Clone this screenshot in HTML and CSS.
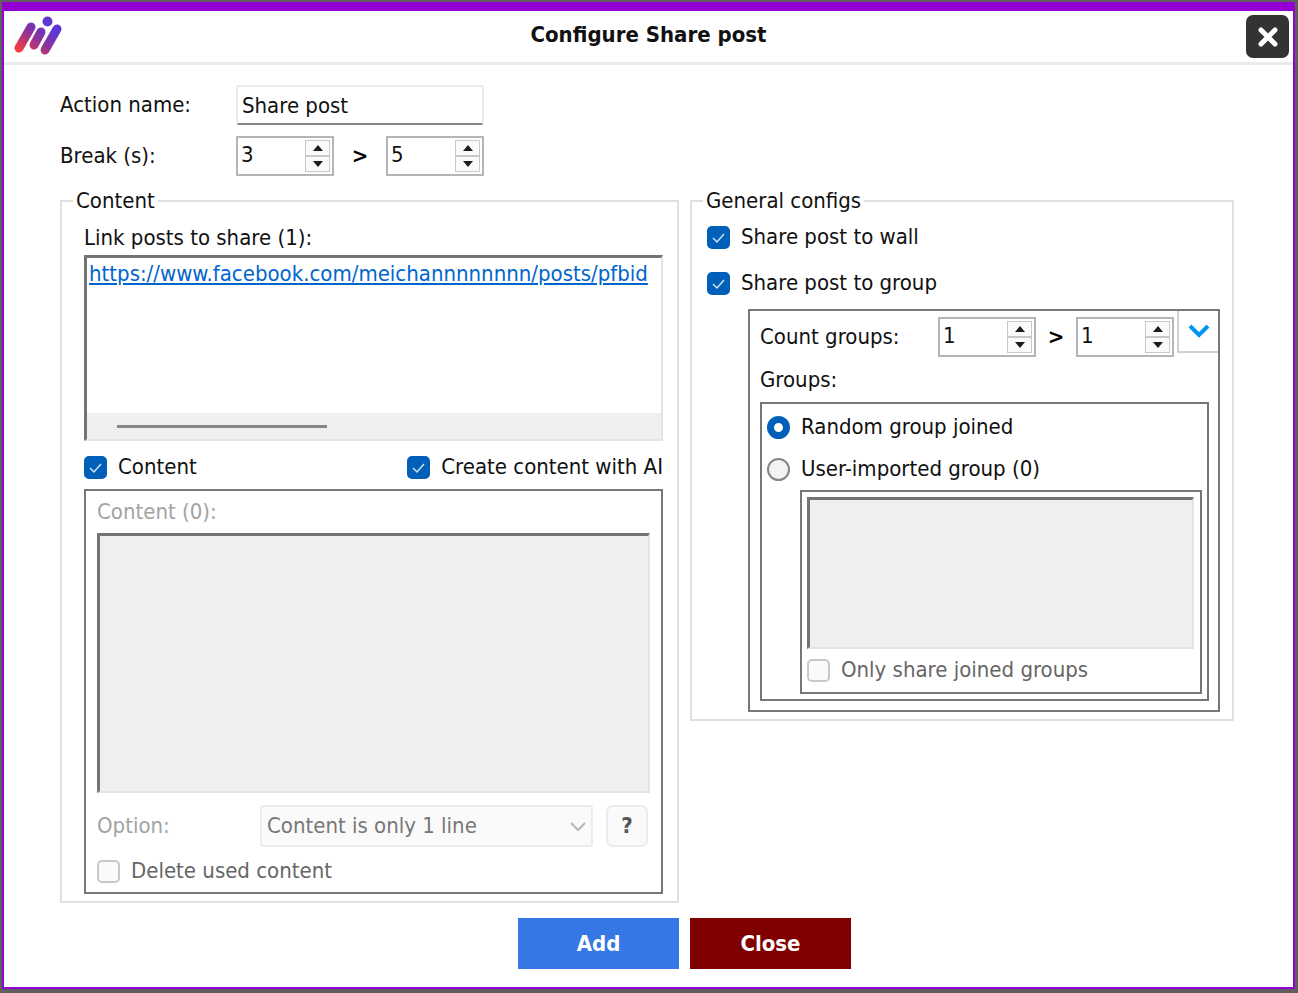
FILE: index.html
```html
<!DOCTYPE html>
<html lang="en">
<head>
<meta charset="utf-8">
<meta name="viewport" content="width=device-width, initial-scale=1">
<title>Configure Share post</title>
<link rel="stylesheet" href="styles.css">
</head>
<body>
<form class="dialog">
  <header class="titlebar">
    <svg class="logo" viewBox="0 0 50 42" aria-hidden="true">
      <defs>
        <linearGradient id="brand" gradientUnits="userSpaceOnUse" x1="10" y1="38" x2="34" y2="8">
          <stop offset="0" stop-color="#f23b3f"/>
          <stop offset="0.55" stop-color="#8a32a0"/>
          <stop offset="1" stop-color="#5a35d8"/>
        </linearGradient>
      </defs>
      <g stroke="url(#brand)" stroke-width="9" stroke-linecap="round" fill="none">
        <path d="M5 32L17 11"/><path d="M20 29L27 16"/><path d="M31 34L43 13"/>
      </g>
      <circle cx="33.500" cy="5.500" r="5" fill="#5f38cf"/>
    </svg>
    <h1 class="title">Configure Share post</h1>
    <button type="button" class="dismiss" aria-label="Close window">
      <svg viewBox="0 0 20 20" aria-hidden="true"><path d="M3 3L17 17M17 3L3 17"/></svg>
    </button>
  </header>

  <main class="body">
    <section class="basics">
      <label for="action">Action name:</label>
      <input class="textbox" id="action" type="text" value="Share post">
      <label for="break-min">Break (s):</label>
      <div class="range">
        <span class="spin"><input id="break-min" type="text" inputmode="numeric" value="3"><span class="steps"><button type="button" class="up" aria-label="Increase minimum break"></button><button type="button" class="down" aria-label="Decrease minimum break"></button></span></span>
        <span class="gt">&gt;</span>
        <span class="spin"><input aria-label="Maximum break" type="text" inputmode="numeric" value="5"><span class="steps"><button type="button" class="up" aria-label="Increase maximum break"></button><button type="button" class="down" aria-label="Decrease maximum break"></button></span></span>
      </div>
    </section>

    <div class="columns">
      <fieldset class="group content">
        <legend>Content</legend>
        <div class="line">Link posts to share (1):</div>
        <div class="well links">
          <a href="#post">https://www.facebook.com/meichannnnnnnn/posts/pfbid</a>
          <div class="scroll"><div class="thumb"></div></div>
        </div>
        <div class="toggles">
          <label class="check"><input type="checkbox" checked>Content</label>
          <label class="check"><input type="checkbox" checked>Create content with AI</label>
        </div>
        <div class="panel texts">
          <label class="muted line" for="texts">Content (0):</label>
          <textarea class="well area" id="texts" disabled></textarea>
          <div class="option">
            <label class="muted" for="option">Option:</label>
            <span class="pick">
              <select id="option" disabled><option>Content is only 1 line</option></select>
              <svg viewBox="0 0 16 10" aria-hidden="true"><path d="M1 1L8 8L15 1"/></svg>
            </span>
            <button type="button" class="help" disabled>?</button>
          </div>
          <label class="check off"><input type="checkbox" disabled>Delete used content</label>
        </div>
      </fieldset>

      <fieldset class="group general">
        <legend>General configs</legend>
        <label class="check"><input type="checkbox" checked>Share post to wall</label>
        <label class="check second"><input type="checkbox" checked>Share post to group</label>
        <div class="panel groups">
          <div class="count">
            <label for="count-min">Count groups:</label>
            <div class="range">
              <span class="spin"><input id="count-min" type="text" inputmode="numeric" value="1"><span class="steps"><button type="button" class="up" aria-label="Increase minimum groups"></button><button type="button" class="down" aria-label="Decrease minimum groups"></button></span></span>
              <span class="gt">&gt;</span>
              <span class="spin"><input aria-label="Maximum groups" type="text" inputmode="numeric" value="1"><span class="steps"><button type="button" class="up" aria-label="Increase maximum groups"></button><button type="button" class="down" aria-label="Decrease maximum groups"></button></span></span>
            </div>
            <button type="button" class="expand" aria-label="Collapse group settings"><svg viewBox="0 0 22 14" aria-hidden="true"><path d="M2 2L11 11L20 2"/></svg></button>
          </div>
          <div class="caption">Groups:</div>
          <div class="panel source">
            <label class="check"><input type="radio" name="source" checked>Random group joined</label>
            <label class="check"><input type="radio" name="source">User-imported group (0)</label>
            <div class="panel imported">
              <textarea class="well area" aria-label="Imported groups" disabled></textarea>
              <label class="check off"><input type="checkbox" disabled>Only share joined groups</label>
            </div>
          </div>
        </div>
      </fieldset>
    </div>

    <footer class="actions">
      <button type="submit" class="add">Add</button>
      <button type="button" class="close">Close</button>
    </footer>
  </main>
</form>
</body>
</html>
```
FILE: styles.css
```css
* { box-sizing: border-box; }
body {
  margin: 0;
  min-height: 100vh;
  display: flex;
  padding: 2px 3px 4px 2px;
  background: #5f5f5f;
  color: #111;
  font: 22px/30px "DejaVu Sans Condensed", "DejaVu Sans", sans-serif;
}
input, button, select, textarea { font: inherit; color: inherit; margin: 0; }
.dialog {
  flex: 1;
  background: #fff;
  border: 2px solid #9400d3;
  border-top-width: 9px;
}
.titlebar {
  display: grid;
  grid-template-columns: 1fr auto 1fr;
  align-items: center;
  height: 54px;
  padding: 0 4px;
  border-bottom: 3px solid #ebebeb;
}
.logo { width: 50px; height: 42px; margin-left: 6px; }
.title { margin: 0; padding-bottom: 3px; font-weight: bold; font-size: 22px; }
.dismiss {
  display: grid;
  place-items: center;
  justify-self: end;
  width: 43px;
  height: 43px;
  padding: 0;
  border: 0;
  border-radius: 7px;
  background: #333;
}
.dismiss svg { width: 20px; height: 20px; stroke: #fff; stroke-width: 5; stroke-linecap: round; }
.body { padding: 20px 59px 14px 56px; }

.basics {
  display: grid;
  grid-template-columns: 176px 248px;
  row-gap: 11px;
  align-items: center;
}
.textbox {
  width: 100%;
  height: 40px;
  padding: 0 4px;
  border: 2px solid #ececec;
  border-bottom-color: #868686;
  border-radius: 3px;
}
.range { display: flex; align-items: center; justify-content: space-between; }
.gt { font-weight: bold; color: #000; }
.spin {
  display: flex;
  width: 98px;
  height: 40px;
  padding: 2px;
  border: 2px solid #b4b4ba;
  background: #fff;
}
.spin input { flex: 1; width: 0; padding: 0 0 2px 1px; border: 0; }
.steps { display: flex; flex-direction: column; width: 25px; height: 32px; background: #f0f0f0; }
.steps button {
  display: grid;
  place-items: center;
  flex: 1;
  padding: 0;
  border: 1px solid #c8c8c8;
  background: #fafafa;
}
.up::before, .down::before {
  content: "";
  border: 5px solid transparent;
  border-top-width: 0;
  border-bottom: 6px solid #1c1c1c;
}
.down::before { border-bottom-width: 0; border-top: 6px solid #1c1c1c; }

.columns {
  display: grid;
  grid-template-columns: 619fr 544fr;
  gap: 11px;
  align-items: start;
  margin-top: 10px;
}
.group { min-width: 0; margin: 0; border: 2px solid #e0e0e0; }
.group legend { padding: 0 3px; }
.content { padding: 6px 14px 7px 22px; }
.content legend { margin-left: -11px; }
.general { padding: 6px 12px 7px 15px; }
.general legend { margin-left: -4px; }
.line { display: block; line-height: 32px; }
.panel { border: 2px solid #777; }
.well {
  display: block;
  width: 100%;
  border: 3px solid #747474;
  border-right: 2px solid #e4e4e4;
  border-bottom: 2px solid #e4e4e4;
}
.links { display: flex; flex-direction: column; height: 186px; margin-top: 1px; padding-top: 1px; }
.links a { margin-left: 2px; color: #0066cc; white-space: nowrap; }
.scroll { margin-top: auto; padding: 12px 30px 11px; background: #efefef; }
.thumb { width: 210px; height: 3px; background: #868686; }
.toggles { display: flex; justify-content: space-between; padding: 11px 0 7px; }
.check { display: flex; align-items: center; gap: 11px; }
.check input {
  appearance: none;
  flex: none;
  width: 23px;
  height: 23px;
  border: 2px solid #868686;
  border-radius: 5px;
  background: #f3f3f3;
}
.check input:checked {
  border-color: #005fb8;
  background: #005fb8 url("data:image/svg+xml,%3Csvg xmlns='http://www.w3.org/2000/svg' viewBox='0 0 19 19'%3E%3Cpath d='M4 10L8 14L15 6' fill='none' stroke='%23cfe4f7' stroke-width='1.5'/%3E%3C/svg%3E") center / 19px 19px no-repeat;
}
.check input[type="radio"] { border-radius: 50%; }
.check input[type="radio"]:checked { border: 7px solid #005fb8; background: #fff; }
.check input:disabled { border-color: #c8c8c8; background: #fafafa; }
.off { color: #666; }
.muted { color: #a3a3a3; }
.texts { padding: 5px 11px 6px; }
.texts .line { padding-bottom: 5px; }
.area { height: 260px; padding: 0; resize: none; background: #efefef; }
.option { display: grid; grid-template-columns: 150px 1fr 42px; column-gap: 13px; align-items: center; padding: 12px 2px 9px 0; }
.pick { position: relative; }
.pick select {
  appearance: none;
  display: block;
  width: 100%;
  height: 42px;
  padding: 0 5px;
  border: 2px solid #ececec;
  border-radius: 3px;
  background: #fafafa;
  color: #777;
  opacity: 1;
}
.pick svg { position: absolute; right: 7px; top: 17px; width: 16px; height: 10px; fill: none; stroke: #b8b8b8; stroke-width: 2; }
.help { height: 42px; padding: 0; border: 2px solid #ececec; border-radius: 7px; background: #fafafa; color: #555; font-weight: bold; }

.second { margin-top: 16px; }
.groups { margin: 11px 0 0 41px; padding: 0 9px 9px 10px; }
.count { display: flex; align-items: center; justify-content: flex-end; margin-right: -9px; }
.count label { flex: 1; padding-top: 6px; }
.count .range { width: 236px; padding-top: 6px; }
.expand {
  display: grid;
  place-items: center;
  align-self: flex-start;
  width: 41px;
  height: 42px;
  margin-left: 3px;
  padding: 0;
  border: 0 solid #d0d0d4;
  border-width: 0 0 2px 2px;
  background: #fff;
}
.expand svg { width: 22px; height: 14px; fill: none; stroke: #0095f0; stroke-width: 4; }
.caption { padding: 8px 0 7px; }
.source { padding: 8px 5px 5px 5px; }
.source > .check { margin-bottom: 12px; }
.source > .check + .check { margin-bottom: 6px; }
.imported { margin-left: 33px; padding: 5px 6px 7px 5px; }
.imported .area { height: 152px; margin-bottom: 6px; }

.actions { display: flex; gap: 11px; margin-top: 15px; padding-left: 458px; }
.actions button { width: 161px; height: 51px; padding: 0; border: 0; color: #fff; font-weight: bold; }
.actions .add { background: #3578e5; }
.actions .close { background: #800000; }
```
